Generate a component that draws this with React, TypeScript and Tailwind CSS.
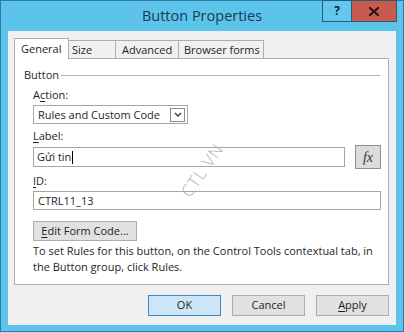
import React from "react";

const font = { fontFamily: '"Open Sans", "Noto Sans", sans-serif' };

function U({ children }: { children: React.ReactNode }) {
  return <span className="underline underline-offset-2">{children}</span>;
}

export default function App() {
  return (
    <div className="w-[404px] h-[332px] bg-[#5cc3eb] border border-[#2f7aa3] flex flex-col text-[11px] text-[#1e1e1e] select-none" style={font}>
      {/* title bar */}
      <div className="relative h-[30px] shrink-0 flex items-center justify-center">
        <span className="text-[14.5px] text-[#163c52] leading-none mt-[1px]">Button Properties</span>
        <div className="absolute right-[6px] top-[-1px] flex">
          <div className="w-[30px] h-[22px] bg-[#63c6ec] border border-[#2b5a74] flex items-center justify-center text-[12px] font-bold text-[#12283a]">?</div>
          <div className="w-[45px] h-[22px] bg-[#c85a4e] border border-l-0 border-[#2b5a74] flex items-center justify-center">
            <svg width="10" height="9" viewBox="0 0 10 9">
              <path d="M1 1 L9 8 M9 1 L1 8" stroke="#2a1614" strokeWidth="2.2" strokeLinecap="square" />
            </svg>
          </div>
        </div>
      </div>
      {/* client */}
      <div className="mx-[7px] mb-[6px] flex-1 bg-[#f0f0f0] flex flex-col pl-[6px] pr-[7px] pt-[7px]">
        {/* tabs */}
        <div className="flex items-end h-[20px] relative z-10">
          <div className="h-[21px] w-[55px] bg-white border border-b-0 border-[#adadad] pl-[6px] pt-[1px] leading-[17px] -mb-[1px]">General</div>
          <div className="h-[18px] w-[47px] bg-[#f0f0f0] border border-l-0 border-b-0 border-[#adadad] pl-[3px] leading-[17px]">Size</div>
          <div className="h-[18px] w-[63px] bg-[#f0f0f0] border border-l-0 border-b-0 border-[#adadad] pl-[6px] leading-[17px]">Advanced</div>
          <div className="h-[18px] w-[85px] bg-[#f0f0f0] border border-l-0 border-b-0 border-[#adadad] pl-[5px] leading-[17px]">Browser forms</div>
        </div>
        {/* panel */}
        <div className="relative h-[227px] bg-white border border-[#adadad] flex flex-col pl-[18px] pr-[7px] pt-[8px]">
          <div className="flex items-center h-[16px] -ml-[9px]">
            <span className="leading-[16px] pr-[2px]">Button</span>
            <div className="flex-1 h-px bg-[#b4b4b4] mr-[1px]" />
          </div>
          <div className="h-[16px] leading-[16px] mt-[4px]">A<U>c</U>tion:</div>
          <div className="mt-[2px] w-[155px] h-[19px] border border-[#a5a5a5] flex items-center justify-between pl-[4px] pr-[2px]">
            <span className="leading-[16px]">Rules and Custom Code</span>
            <div className="w-[15px] h-[14px] border border-[#8a8a8a] flex items-center justify-center">
              <svg width="8" height="5" viewBox="0 0 8 5">
                <path d="M1 1 L4 4 L7 1" stroke="#333" strokeWidth="1.3" fill="none" />
              </svg>
            </div>
          </div>
          <div className="h-[16px] leading-[16px] mt-[4px]"><U>L</U>abel:</div>
          <div className="mt-[1px] flex items-center h-[24px]">
            <div className="w-[312px] h-[20px] border border-[#a5a5a5] pl-[3px] flex items-center">
              <span className="leading-[16px]">Gửi tin</span>
              <span className="w-px h-[13px] bg-black ml-[1px]" />
            </div>
            <div className="ml-[10px] w-[26px] h-[24px] bg-[#dcdcdc] border border-[#8f8f8f] flex items-center justify-center">
              <span className="italic text-[14px] text-[#333]" style={{ fontFamily: '"Liberation Serif", serif' }}>fx</span>
            </div>
          </div>
          <div className="h-[16px] leading-[16px] mt-[4px]"><U>I</U>D:</div>
          <div className="mt-[2px] h-[19px] border border-[#a5a5a5] pl-[4px] flex items-center">
            <span className="leading-[16px]">CTRL11_13</span>
          </div>
          <div className="mt-[11px] w-[104px] h-[20px] bg-[#e1e1e1] border border-[#adadad] flex items-center justify-center">
            <span className="leading-[16px]"><U>E</U>dit Form Code...</span>
          </div>
          <div className="mt-[2px] leading-[16px]">
            To set Rules for this button, on the Control Tools contextual tab, in
            <br />
            the Button group, click Rules.
          </div>
          <div className="absolute left-[187px] top-[111px] -translate-x-1/2 -translate-y-1/2 -rotate-[55deg] text-[17px] font-light tracking-[1px] text-[#b4b4b4] pointer-events-none whitespace-nowrap leading-none">
            CTL VN
          </div>
        </div>
        {/* footer */}
        <div className="flex justify-end gap-[11px] mt-[10px]">
          <div className="w-[73px] h-[21px] bg-[#cde6f7] border border-[#3d87c4] flex items-center justify-center">OK</div>
          <div className="w-[73px] h-[21px] bg-[#e1e1e1] border border-[#adadad] flex items-center justify-center">Cancel</div>
          <div className="w-[73px] h-[21px] bg-[#e1e1e1] border border-[#adadad] flex items-center justify-center"><U>A</U>pply</div>
        </div>
      </div>
    </div>
  );
}
